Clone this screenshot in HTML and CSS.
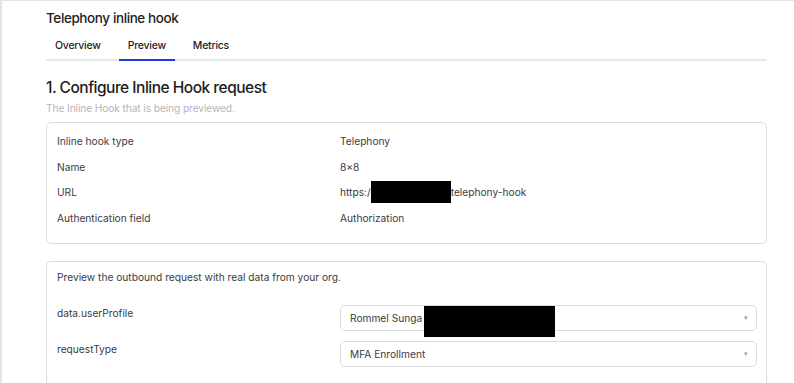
FILE: index.html
```html
<!DOCTYPE html>
<html lang="en">
<head>
  <meta charset="UTF-8" />
  <title>Telephony inline hook</title>
  <link rel="stylesheet" href="styles.css">
</head>
<body>
  <div class="page">
    <div class="content">
      <h1 class="hook-title">Telephony inline hook</h1>

      <div class="tabs">
        <div class="tab">Overview</div>
        <div class="tab active">Preview</div>
        <div class="tab">Metrics</div>
      </div>

      <h2 class="section-title">1. Configure Inline Hook request</h2>
      <p class="section-sub">The Inline Hook that is being previewed.</p>

      <div class="card info-card">
        <div class="info-row">
          <span class="info-label">Inline hook type</span>
          <span class="info-value">Telephony</span>
        </div>
        <div class="info-row">
          <span class="info-label">Name</span>
          <span class="info-value">8×8</span>
        </div>
        <div class="info-row">
          <span class="info-label">URL</span>
          <span class="info-value">https:/<span class="redact url-redact"></span>telephony-hook</span>
        </div>
        <div class="info-row">
          <span class="info-label">Authentication field</span>
          <span class="info-value">Authorization</span>
        </div>
      </div>

      <div class="card preview-card">
        <p class="preview-note">Preview the outbound request with real data from your org.</p>
        <div class="field-row">
          <span class="field-label">data.userProfile</span>
          <div class="select">
            <span class="select-text">Rommel Sunga (</span>
            <span class="redact user-redact"></span>
            <span class="caret">▾</span>
          </div>
        </div>
        <div class="field-row">
          <span class="field-label">requestType</span>
          <div class="select">
            <span class="select-text">MFA Enrollment</span>
            <span class="caret">▾</span>
          </div>
        </div>
      </div>
    </div>
  </div>
</body>
</html>
```

FILE: styles.css
```css
* {
  box-sizing: border-box;
  margin: 0;
  padding: 0;
}

body {
  font-family: Inter, "Noto Sans", sans-serif;
  background: #fff;
  color: #1d1d21;
  height: 383px;
  overflow: hidden;
}

.page {
  border-top: 1px solid #e4e4e6;
  border-left: 2px solid #e4e4e6;
  height: 100%;
}

.content {
  margin-left: 44px;
  width: 721px;
}

.hook-title {
  font-size: 13.5px;
  font-weight: 500;
  letter-spacing: -0.4px;
  line-height: 20px;
  padding-top: 7px;
  color: #1d1d21;
}

.tabs {
  display: flex;
  border-bottom: 2px solid #e8e8ea;
  margin-top: 5px;
}

.tab {
  font-size: 10.5px;
  font-weight: 500;
  letter-spacing: -0.25px;
  color: #1d1d21;
  padding: 5px 9px 5px 9px;
  margin-right: 9px;
  margin-bottom: -2px;
  border-bottom: 2px solid transparent;
  line-height: 16px;
}

.tab.active {
  border-bottom-color: #1f3be0;
}

.section-title {
  font-size: 15.5px;
  font-weight: 500;
  letter-spacing: -0.5px;
  line-height: 22px;
  margin-top: 16px;
  color: #1d1d21;
}

.section-sub {
  font-size: 10.2px;
  letter-spacing: -0.1px;
  color: #b5b5ba;
  line-height: 16px;
  margin-top: 1px;
}

.card {
  border: 1px solid #dcdcdf;
  border-radius: 5px;
  background: #fff;
}

.info-card {
  margin-top: 6px;
  padding: 5px 10px 12px 10px;
}

.info-row {
  display: flex;
  font-size: 10.2px;
  line-height: 16px;
  height: 25.7px;
  align-items: center;
  color: #3a3a3f;
}

.info-label {
  width: 283px;
}

.info-value {
  display: flex;
  align-items: center;
}

.redact {
  display: inline-block;
  background: #000;
}

.url-redact {
  width: 80px;
  height: 22px;
}

.preview-card {
  margin-top: 17px;
  padding: 7px 9px 20px 10px;
}

.preview-note {
  font-size: 10.2px;
  line-height: 16px;
  color: #3a3a3f;
}

.field-row {
  display: flex;
  margin-top: 20px;
  font-size: 10.2px;
  color: #3a3a3f;
}

.field-row + .field-row {
  margin-top: 10px;
}

.field-label {
  width: 283px;
  line-height: 16px;
}

.select {
  position: relative;
  flex: 1;
  height: 26px;
  border: 1px solid #dcdcdf;
  border-radius: 5px;
  display: flex;
  align-items: center;
  padding-left: 9px;
}

.select-text {
  line-height: 16px;
}

.user-redact {
  position: absolute;
  left: 83px;
  top: 0;
  width: 131px;
  height: 31px;
}

.caret {
  position: absolute;
  right: 8px;
  top: 7px;
  font-size: 7px;
  color: #a0a0a5;
}
```
